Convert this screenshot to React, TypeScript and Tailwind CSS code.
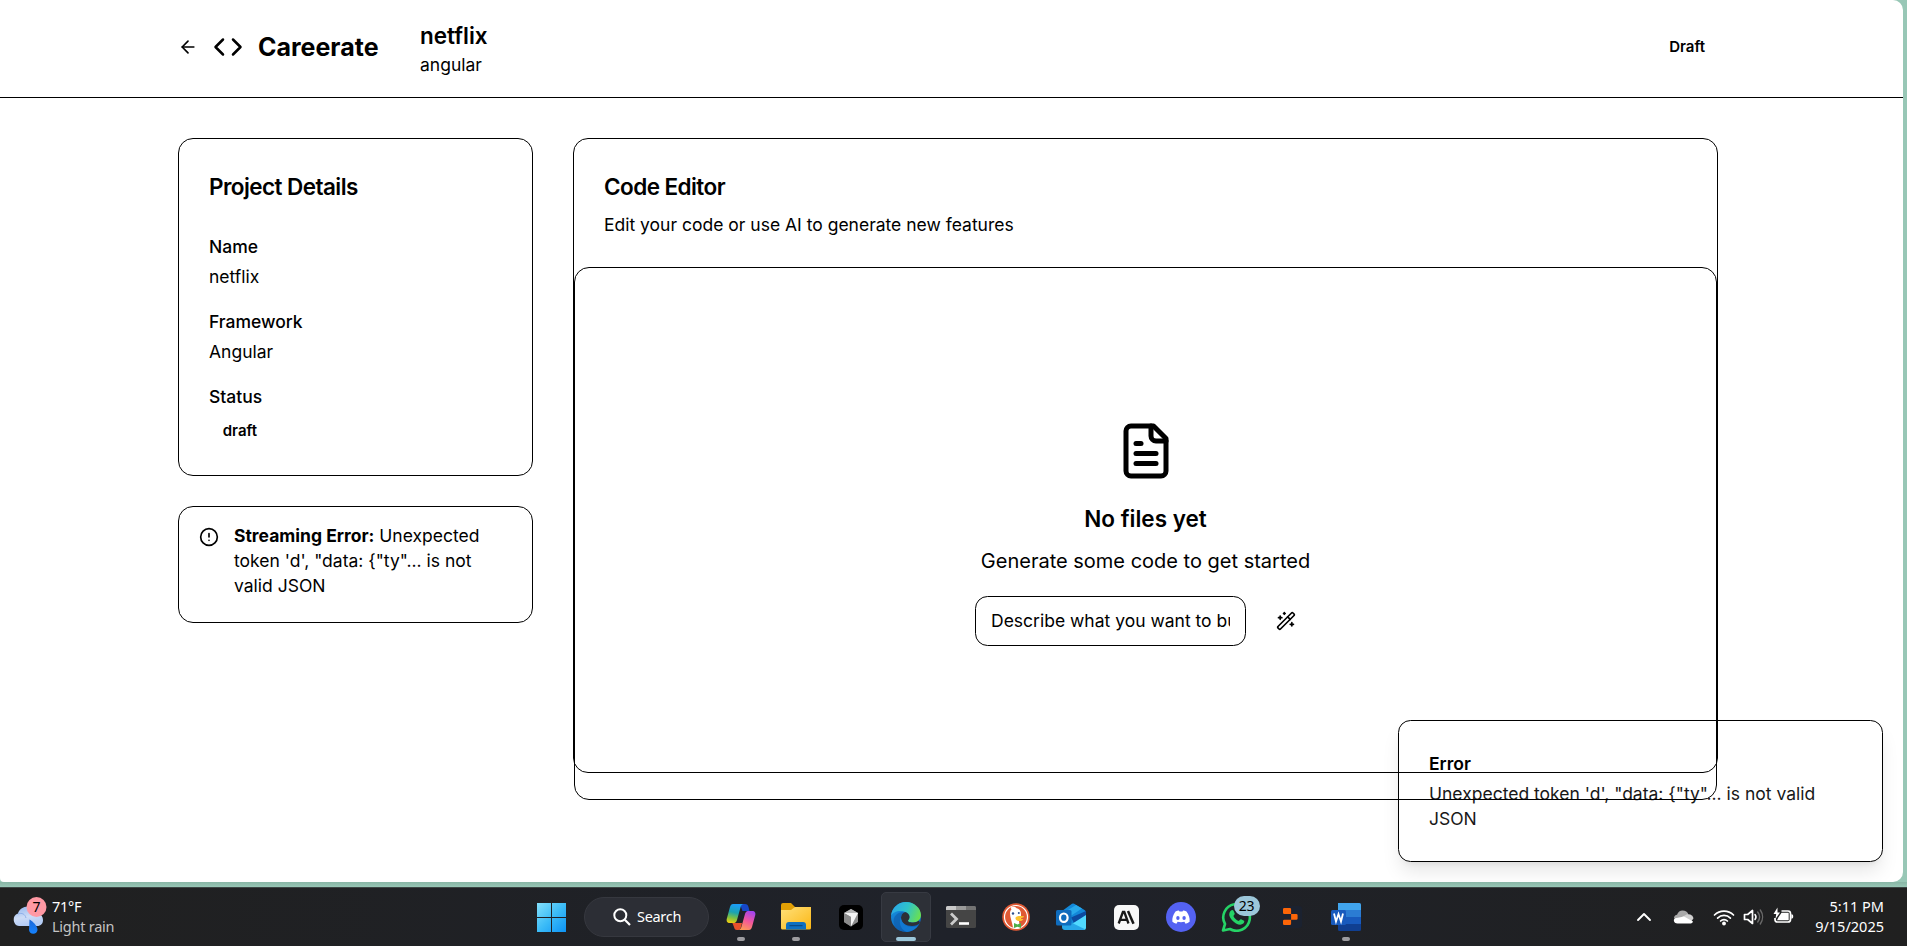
import React from "react";

type IconProps = { size: number; className?: string; children: React.ReactNode };

function LineIcon({ size, className, children }: IconProps) {
  return (
    <svg
      width={size}
      height={size}
      viewBox="0 0 24 24"
      fill="none"
      stroke="currentColor"
      strokeWidth="2"
      strokeLinecap="round"
      strokeLinejoin="round"
      className={"shrink-0 " + (className ?? "")}
    >
      {children}
    </svg>
  );
}

function Header() {
  return (
    <header className="flex h-[98px] shrink-0 items-center border-b border-black pb-[3px] pl-[178px] pr-[198px]">
      <LineIcon size={20}>
        <path d="m12 19-7-7 7-7" />
        <path d="M19 12H5" />
      </LineIcon>
      <LineIcon size={30} className="ml-[15px]">
        <path d="m16 18 6-6-6-6" />
        <path d="m8 6-6 6 6 6" />
      </LineIcon>
      <span className="ml-[15px] w-[162px] text-[25px] leading-[35px] font-bold tracking-normal">Careerate</span>
      <div>
        <h1 className="text-[22.5px] leading-[35px] font-semibold">netflix</h1>
        <p className="-mt-px text-[17.5px] leading-[25px]">angular</p>
      </div>
      <span className="ml-auto text-[15px] leading-5 font-semibold">Draft</span>
    </header>
  );
}

function ProjectDetails() {
  return (
    <section className="flex h-[338px] flex-col rounded-[15px] border border-black px-[30px] pt-[30px]">
      <h2 className="text-[22.5px] leading-[35px] font-semibold tracking-[-0.56px]">Project Details</h2>
      <dl className="mt-[30px] flex flex-col gap-5 text-[17.5px] leading-[25px]">
        <div className="flex flex-col gap-[5px]">
          <dt className="font-medium">Name</dt>
          <dd>netflix</dd>
        </div>
        <div className="flex flex-col gap-[5px]">
          <dt className="font-medium">Framework</dt>
          <dd>Angular</dd>
        </div>
        <div className="flex flex-col gap-[9px]">
          <dt className="font-medium">Status</dt>
          <dd className="pl-[13.75px] text-[15px] font-semibold">draft</dd>
        </div>
      </dl>
    </section>
  );
}

function StreamingAlert() {
  return (
    <section className="mt-[30px] flex h-[117px] gap-[15px] rounded-[15px] border border-black px-5 pt-4">
      <LineIcon size={20} className="mt-[4px]">
        <circle cx="12" cy="12" r="10" />
        <path d="M12 8v4" />
        <path d="M12 16h.01" />
      </LineIcon>
      <p className="w-[260px] text-[17.5px] leading-[25px]">
        <strong className="font-bold">Streaming Error:</strong> Unexpected token 'd', "data: {"{"}"ty"... is not valid JSON
      </p>
    </section>
  );
}

function CodeEditor() {
  return (
    <section className="h-[635px] w-[1145px] rounded-[15px] border border-black">
      <div className="h-[128px] px-[30px] pt-[30px]">
        <h2 className="text-[22.5px] leading-[35px] font-semibold tracking-[-0.56px]">Code Editor</h2>
        <p className="mt-2 text-[17.5px] leading-[25px]">Edit your code or use AI to generate new features</p>
      </div>
      <div className="flex h-[533px] flex-col items-center rounded-[15px] border border-black pt-[153px]">
        <LineIcon size={60}>
          <path d="M15 2H6a2 2 0 0 0-2 2v16a2 2 0 0 0 2 2h12a2 2 0 0 0 2-2V7Z" />
          <path d="M14 2v4a2 2 0 0 0 2 2h4" />
          <path d="M10 9H8" />
          <path d="M16 13H8" />
          <path d="M16 17H8" />
        </LineIcon>
        <h3 className="mt-5 text-[22.5px] leading-[35px] font-semibold">No files yet</h3>
        <p className="mt-[10px] text-[20px] leading-[30px]">Generate some code to get started</p>
        <div className="mt-5 flex gap-[10px]">
          <input
            className="h-[50px] w-[271px] rounded-[12.5px] border border-black px-[15px] pb-[2px] text-[17.5px] leading-[25px] placeholder:text-black placeholder:opacity-100"
            placeholder="Describe what you want to build..."
          />
          <button className="flex h-[50px] items-center px-5" aria-label="Generate">
            <LineIcon size={20}>
              <path d="m21.64 3.64-1.28-1.28a1.21 1.21 0 0 0-1.72 0L2.36 18.64a1.21 1.21 0 0 0 0 1.72l1.28 1.28a1.2 1.2 0 0 0 1.72 0L21.64 5.36a1.2 1.2 0 0 0 0-1.72" />
              <path d="m14 7 3 3" />
              <path d="M5 6v4" />
              <path d="M19 14v4" />
              <path d="M10 2v2" />
              <path d="M7 8H3" />
              <path d="M21 16h-4" />
              <path d="M11 3H9" />
            </LineIcon>
          </button>
        </div>
      </div>
    </section>
  );
}

function Toast() {
  return (
    <div className="absolute right-[20px] bottom-[20px] h-[142px] w-[485px] rounded-[12.5px] border border-black pt-[30px] pl-[30px] text-[17.5px] leading-[25px] shadow-[0_12.5px_18.75px_-3.75px_rgba(0,0,0,0.1),0_5px_7.5px_-5px_rgba(0,0,0,0.1)]">
      <p className="font-semibold">Error</p>
      <p className="mt-[5px] w-[400px] opacity-90">Unexpected token 'd', "data: {"{"}"ty"... is not valid JSON</p>
    </div>
  );
}

function Weather() {
  return (
    <div className="flex w-[537px] shrink-0 items-center pl-[13px]">
      <svg width="34" height="40" viewBox="0 0 34 40" className="-mt-[3px] shrink-0">
        <defs>
          <linearGradient id="cloud" x1="0" y1="0" x2="0.3" y2="1">
            <stop offset="0" stopColor="#8fb4ee" />
            <stop offset="0.6" stopColor="#cddcf6" />
            <stop offset="1" stopColor="#b4ccf5" />
          </linearGradient>
          <linearGradient id="drop" x1="0" y1="0" x2="0" y2="1">
            <stop offset="0" stopColor="#1a66d8" />
            <stop offset="1" stopColor="#1583ff" />
          </linearGradient>
        </defs>
        <path d="M6 30a6.500 6.500 0 0 1-1-12.500c1-4 5-7 10-7 6 0 9 3 10 7 3 1 5 3 5 6.500s-2 6-6 6Z" fill="url(#cloud)" />
        <path d="M5 18c4-1.500 7 0 8 4" stroke="#8fb0ea" strokeWidth="1" fill="none" />
        <path d="M16.500 23.500c3 2 8 6 8 10.500a4.300 4.300 0 0 1-8.500 0Z" fill="url(#drop)" />
        <circle cx="23.500" cy="11" r="10" fill="#ff99a4" />
        <text x="23.500" y="16" textAnchor="middle" fontSize="14" fill="#000" fontFamily="Noto Sans, sans-serif">
          7
        </text>
      </svg>
      <div className="-mt-[2px] ml-[5px] text-[14.5px] leading-[20px] tracking-[-0.25px]">
        <p>71°F</p>
        <p className="text-[#c4c4c4]">Light rain</p>
      </div>
    </div>
  );
}

function Tile({ children, state }: { children: React.ReactNode; state?: "open" | "active" }) {
  return (
    <div
      className={
        state === "active"
          ? "mx-[2.5px] flex h-[50px] w-[50px] flex-col items-center rounded-[5px] border border-[#373a42] bg-[#2d3037] pt-[5px]"
          : "flex h-[50px] w-[55px] flex-col items-center pt-[6px]"
      }
    >
      <div className="flex h-[38px] items-center">{children}</div>
      {state === "open" && <span className="mt-px h-1 w-2 shrink-0 rounded-full bg-[#9d9ca0]" />}
      {state === "active" && <span className="mt-px h-1 w-5 shrink-0 rounded-full bg-[#9cc7da]" />}
    </div>
  );
}

function CopilotLogo() {
  return (
    <svg width="30" height="28" viewBox="0 0 30 28">
      <defs>
        <linearGradient id="cpA" x1="0.3" y1="0" x2="0.1" y2="1">
          <stop offset="0" stopColor="#1b9df5" />
          <stop offset="0.4" stopColor="#1ba3b0" />
          <stop offset="0.7" stopColor="#7fc241" />
          <stop offset="1" stopColor="#fdd10a" />
        </linearGradient>
        <linearGradient id="cpB" x1="0.7" y1="0" x2="0.3" y2="1">
          <stop offset="0" stopColor="#a244ee" />
          <stop offset="0.5" stopColor="#f2569b" />
          <stop offset="1" stopColor="#fd9a56" />
        </linearGradient>
      </defs>
      <path d="M14 1h5c2 0 3 1 3.500 3l1 4h-7Z" fill="#1647c8" />
      <path d="M6 19l3 1h7l-1 4c-.5 2-1 3-3 3h-1c-2 0-2.500-1-3-3Z" fill="#e9512c" />
      <path d="M7 1h11c-2 0-3 1.500-3.500 3.500L11 17c-.7 2.500-2 3-4 3H4c-3 0-4-2-3-5L4 4c.6-2 1.500-3 3-3Z" fill="url(#cpA)" />
      <path d="M23 27H12c2 0 3-1.500 3.500-3.500L19 11c.7-2.500 2-3 4-3h3c3 0 4 2 3 5l-3 11c-.6 2-1.500 3-3 3Z" fill="url(#cpB)" />
    </svg>
  );
}

function FolderLogo() {
  return (
    <svg width="30" height="28" viewBox="0 0 30 28">
      <defs>
        <linearGradient id="folder" x1="0" y1="0" x2="1" y2="1">
          <stop offset="0" stopColor="#ffe07a" />
          <stop offset="1" stopColor="#fcb714" />
        </linearGradient>
      </defs>
      <path d="M0 2a2 2 0 0 1 2-2h8l4 4h14a2 2 0 0 1 2 2v6H0Z" fill="#e2a005" />
      <path d="M0 7h10l4-3h16v21a1.500 1.500 0 0 1-1.500 1.500h-27A1.500 1.500 0 0 1 0 25Z" fill="url(#folder)" />
      <path d="M5 26.500V22a3 3 0 0 1 3-3h14a3 3 0 0 1 3 3v4.500Z" fill="#0f70c0" />
      <path d="M9 22.700h12" stroke="#0a4a86" strokeWidth="1.300" strokeLinecap="round" />
    </svg>
  );
}

function CursorLogo() {
  return (
    <svg width="24" height="25" viewBox="0 0 24 25">
      <rect width="24" height="25" rx="5" fill="#000" />
      <path d="M12 4l7 4v9l-7 4.500L5 17V8Z" fill="#8d8d8d" />
      <path d="M5 8l7-4 7 4-7 2Z" fill="#b9b9b9" />
      <path d="M5 8h14l-7 13.500V12Z" fill="#f4f4f4" />
      <path d="M5 8l7 4v9.500L5 17Z" fill="#8a8a8a" />
    </svg>
  );
}

function EdgeLogo() {
  return (
    <svg width="30" height="30" viewBox="0 0 30 30">
      <defs>
        <linearGradient id="edTop" x1="0" y1="0.3" x2="1" y2="0.6">
          <stop offset="0" stopColor="#2aa7e8" />
          <stop offset="0.5" stopColor="#2fc3c9" />
          <stop offset="1" stopColor="#6be04f" />
        </linearGradient>
        <linearGradient id="edLow" x1="0" y1="0" x2="0.5" y2="1">
          <stop offset="0" stopColor="#1a9be6" />
          <stop offset="1" stopColor="#0b62bd" />
        </linearGradient>
      </defs>
      <circle cx="15" cy="15" r="15" fill="url(#edLow)" />
      <path d="M0 14C1 5 8 0 15 0c8 0 15 6 15 13 0 5-4 7.500-8 7.500-3.500 0-5.500-1-5-2 .4-.8 1.500-1.500 1.500-3.500 0-3.500-4-6-9-6C5 9 1 11 0 14Z" fill="url(#edTop)" />
      <path d="M10 15.500c0-3 2-5 4-5.500 3 .8 4.500 3 4.500 5 0 2-1.100 2.700-1.500 3.500-.5 1 1.500 2 5 2 2.500 0 4.500-.7 6-2L29 21c-2 2-4.500 3-8 3-6 0-11-3.500-11-8.500Z" fill="#2d3037" />
      <path d="M10 15.500C9 21 14 27 21 27.500 17 31 10 30 6 27c-5-5-4-12 0-15 3-2 6-2 8-2-2.500 1-3.500 3-4 5.500Z" fill="#0f5fae" opacity="0.700" />
      <path d="M10 15c-.5 6 5 10 11 10 3 0 5-1 6.500-2C25 27 21 29.500 16 30c-6-2-9-9-6-15Z" fill="#1278d0" />
    </svg>
  );
}

function TerminalLogo() {
  return (
    <svg width="30" height="22" viewBox="0 0 30 22">
      <rect width="30" height="22" rx="1.500" fill="#454545" />
      <path d="M0 4V1.500A1.500 1.500 0 0 1 1.500 0H10v4Z" fill="#c9c9c9" />
      <path d="M10 0h10v4H10Z" fill="#9a9a9a" />
      <path d="M20 0h8.500A1.500 1.500 0 0 1 30 1.500V4H20Z" fill="#737373" />
      <path d="M5 7.500l5.500 5.500L5 18.500" stroke="#ccc" strokeWidth="2.800" fill="none" />
      <path d="M13 17.500h10" stroke="#fff" strokeWidth="2.600" />
    </svg>
  );
}

function DuckLogo() {
  return (
    <svg width="28" height="28" viewBox="0 0 28 28">
      <circle cx="14" cy="14" r="13.800" fill="#e05a35" />
      <circle cx="14" cy="14" r="11.500" fill="none" stroke="#fff" strokeWidth="1.200" />
      <path d="M11 24.500C10 19 8 14 8 10.500 8 7 10 5 13 5c4 0 6 2.500 6 6v4l-2 3 1 7c-2 1-5 .8-7-.5Z" fill="#fff" />
      <path d="M9 5.500c2-1 4-.5 5 .5" stroke="#fff" strokeWidth="2" fill="none" />
      <circle cx="11" cy="10.500" r="1.200" fill="#2d4f8e" />
      <circle cx="16.800" cy="10" r="1" fill="#2d4f8e" />
      <path d="M14 14c2-1.500 5-1 8-.8 0 1.500-3 2-4.500 2.300l4 .7c-1.500 2-4.500 2.300-6.500 1.300-1.500-.8-2-2.500-1-3.500Z" fill="#fcc32e" />
      <path d="M12 20l3.500 1.500L19 20v5l-3.500-1.300L12 25Z" fill="#4fae48" />
    </svg>
  );
}

function OutlookLogo() {
  return (
    <svg width="30" height="28" viewBox="0 0 30 28">
      <path d="M6 8L16 .8a2 2 0 0 1 2.200 0L28.500 7A3 3 0 0 1 30 9.500V20H6Z" fill="#1388d9" />
      <path d="M8 9.500L20 2l6 3.600L13 14Z" fill="#28a8ea" />
      <path d="M15 14.500L30 8v5.500L18 20Z" fill="#0c4aa0" />
      <path d="M8 26L30 12v12.500a2.500 2.500 0 0 1-2.500 2.500H10Z" fill="#50d9ff" />
      <path d="M6 15l23 11.300a2.500 2.500 0 0 1-1.500.7H9a3 3 0 0 1-3-3Z" fill="#27a7e8" />
      <rect y="7" width="15.500" height="15.500" rx="1.500" fill="#0f6cbd" />
      <ellipse cx="7.800" cy="14.700" rx="3.800" ry="4.200" fill="none" stroke="#fff" strokeWidth="2.200" />
    </svg>
  );
}

function AnthropicLogo() {
  return (
    <svg width="25" height="25" viewBox="0 0 25 25">
      <rect width="25" height="25" rx="5" fill="#f8f8f8" />
      <path d="M4.700 18.500L8.900 7h1.400l4.200 11.500M6.500 14.800h6.200" stroke="#171717" strokeWidth="2.300" fill="none" />
      <path d="M14 6l5.500 12.700" stroke="#171717" strokeWidth="2.500" />
    </svg>
  );
}

function DiscordLogo() {
  return (
    <svg width="30" height="30" viewBox="0 0 30 30">
      <circle cx="15" cy="15" r="15" fill="#5462f2" />
      <path d="M9.500 9.500c1.200-.6 2.200-.9 3.400-1l.6 1.100h3l.6-1.100c1.200.1 2.200.4 3.400 1 2.400 3.300 3.500 6.500 3.100 10.300-1.200.9-2.600 1.500-4 1.900l-1.200-2c-2.200.6-4.600.6-6.800 0l-1.200 2c-1.400-.4-2.800-1-4-1.900-.4-3.800.7-7 3.100-10.300Z" fill="#fff" />
      <ellipse cx="11.900" cy="16" rx="1.700" ry="1.900" fill="#5462f2" />
      <ellipse cx="18.100" cy="16" rx="1.700" ry="1.900" fill="#5462f2" />
    </svg>
  );
}

function WhatsAppLogo() {
  return (
    <div className="relative">
      <svg width="31" height="30" viewBox="0 0 31 30">
        <path d="M2 28.500l2-6.500A13.300 13.300 0 1 1 9 27Z" fill="none" stroke="#25d366" strokeWidth="2.600" strokeLinejoin="round" />
        <path d="M10 8.500c1-.8 2-.7 2.500.3l1.200 2.700c.3.900-1 1.800-1.300 2.500 1 2.500 3 4 5.300 5 .8-.5 1.500-2 2.400-1.700l2.900 1.500c.6.400.2 2-.7 2.800-2 1.600-4.500 1.200-7.300-.2-3.300-1.800-5.600-4.400-6.600-7.600-.5-2 .3-4.200 1.600-5.300Z" fill="#25d366" />
      </svg>
      <span className="absolute -top-[6px] left-[13px] flex h-5 w-[26px] items-center justify-center rounded-full bg-[#9cc7da] text-[14px] leading-5 tracking-[-0.3px] text-black">
        23
      </span>
    </div>
  );
}

function ReplitLogo() {
  return (
    <svg width="22" height="22" viewBox="0 0 22 22">
      <rect width="22" height="22" rx="3" fill="#1b2230" />
      <path d="M4.300 2h5.500a1.300 1.300 0 0 1 1.300 1.300V8H4.300A1.300 1.300 0 0 1 3 6.700V3.300A1.300 1.300 0 0 1 4.300 2ZM11.100 8h5.200a1.300 1.300 0 0 1 1.300 1.300v3.200a1.300 1.300 0 0 1-1.300 1.300h-5.200ZM4.300 13.800h6.800v4a1.300 1.300 0 0 1-1.300 1.300H4.300A1.300 1.300 0 0 1 3 17.800v-2.700a1.300 1.300 0 0 1 1.300-1.300Z" fill="#fb6508" />
    </svg>
  );
}

function WordLogo() {
  return (
    <svg width="30" height="28" viewBox="0 0 30 28">
      <path d="M7 0h21.500A1.500 1.500 0 0 1 30 1.500V7H7Z" fill="#41a5ee" />
      <path d="M7 7h23v7H7Z" fill="#2b7cd3" />
      <path d="M7 14h23v7H7Z" fill="#185abd" />
      <path d="M7 21h23v5.500a1.500 1.500 0 0 1-1.500 1.500h-20A1.500 1.500 0 0 1 7 26.500Z" fill="#103f91" />
      <rect y="7" width="15" height="15" rx="1.500" fill="#185abd" />
      <path d="M3 10.500l2 8 2.500-7.500 2.500 7.500 2-8" stroke="#fff" strokeWidth="1.800" fill="none" />
    </svg>
  );
}

function Tray() {
  return (
    <div className="ml-auto flex items-center pr-[23px]">
      <svg width="16" height="10" viewBox="0 0 16 10">
        <path d="M2 8l6-6 6 6" stroke="#fff" strokeWidth="1.900" fill="none" strokeLinecap="round" strokeLinejoin="round" />
      </svg>
      <svg width="21" height="14" viewBox="0 0 21 14" className="ml-[21px]">
        <path d="M1 8c0-2 1.500-3 3-3.300C5 2 7 .5 9.500.5c3 0 5 1.500 6 4L4 11Z" fill="#a9a9a9" />
        <path d="M9 7l5-2.700c4-.5 6 1.500 6.500 4L18 12Z" fill="#d0d0d0" />
        <path d="M.8 10c.5-1.500 2-2.300 4-2.300L11 6.500l9 5C19.500 13 18.500 13.500 17 13.500H4.500C2.500 13.500.8 12.500.8 10Z" fill="#fff" />
      </svg>
      <svg width="22" height="18" viewBox="0 0 22 18" className="ml-[19px]">
        <g fill="none" stroke="#fff" strokeWidth="1.700" strokeLinecap="round">
          <path d="M1.500 7a13.500 13.500 0 0 1 19 0" />
          <path d="M4.600 10.100a9 9 0 0 1 12.800 0" />
          <path d="M7.600 13a4.800 4.800 0 0 1 6.800 0" />
        </g>
        <circle cx="11" cy="15.500" r="1.900" fill="#fff" />
      </svg>
      <svg width="21" height="20" viewBox="0 0 21 20" className="ml-[8px]">
        <path d="M1.500 7.500h3.200L9.500 3.500v13l-4.800-4H1.500Z" fill="none" stroke="#fff" strokeWidth="1.700" strokeLinejoin="round" />
        <path d="M12 7.500c1.200 1.500 1.200 3.500 0 5" fill="none" stroke="#fff" strokeWidth="1.500" strokeLinecap="round" />
        <path d="M14.700 5c2.300 3 2.300 7 0 10M17.300 3c3 4.200 3 9.800 0 14" fill="none" stroke="#6a6a6a" strokeWidth="1.400" strokeLinecap="round" />
      </svg>
      <svg width="21" height="18" viewBox="0 0 21 18" className="-mt-[2px] ml-[9px]">
        <path d="M8.500 4H15a2.500 2.500 0 0 1 2.500 2.500v6A2.500 2.500 0 0 1 15 15H4.500A2.500 2.500 0 0 1 2 12.500V11" fill="none" stroke="#fff" strokeWidth="1.700" />
        <path d="M8.500 5.800h7.200v7.400H4l1.500-3Z" fill="#fff" />
        <path d="M18.300 7.300c1.500 0 1.900.8 1.900 2.200s-.4 2.200-1.900 2.200Z" fill="#fff" />
        <path d="M4.500.5L.5 7h2.700L2.500 12 7 5.500H4.500Z" fill="#fff" />
      </svg>
      <div className="-mt-[2px] ml-[17px] w-[73px] text-right text-[14.5px] leading-5 whitespace-nowrap">
        <p>5:11 PM</p>
        <p>9/15/2025</p>
      </div>
    </div>
  );
}

function Taskbar() {
  return (
    <footer className="flex h-[59px] items-center border-t border-[#3c4644] bg-linear-to-r from-[#202020] via-[#1f222a] to-[#202020] font-['Noto_Sans',sans-serif] text-white">
      <Weather />
      <svg width="29" height="29" viewBox="0 0 29 29" className="shrink-0">
        <defs>
          <linearGradient id="win" x1="0" y1="0" x2="29" y2="29" gradientUnits="userSpaceOnUse">
            <stop offset="0" stopColor="#84e0fb" />
            <stop offset="0.5" stopColor="#3cbcf7" />
            <stop offset="1" stopColor="#0c93f5" />
          </linearGradient>
        </defs>
        <path d="M0 0h14v14H0ZM15 0h14v14H15ZM0 15h14v14H0ZM15 15h14v14H15Z" fill="url(#win)" />
      </svg>
      <div className="ml-[18px] flex h-[40px] w-[125px] shrink-0 items-center rounded-full border border-[#36383f] bg-[#2c2e35] pl-[28px] text-[14.5px]">
        <svg width="18" height="18" viewBox="0 0 18 18">
          <circle cx="7.300" cy="7.300" r="6" stroke="#fff" strokeWidth="2" fill="none" />
          <path d="M11.800 11.800L17 17" stroke="#fff" strokeWidth="2.200" />
        </svg>
        <span className="ml-[6px] tracking-[-0.3px]">Search</span>
      </div>
      <div className="ml-[4.5px] flex shrink-0 items-center">
        <Tile state="open"><CopilotLogo /></Tile>
        <Tile state="open"><FolderLogo /></Tile>
        <Tile><CursorLogo /></Tile>
        <Tile state="active"><EdgeLogo /></Tile>
        <Tile><TerminalLogo /></Tile>
        <Tile><DuckLogo /></Tile>
        <Tile><OutlookLogo /></Tile>
        <Tile><AnthropicLogo /></Tile>
        <Tile><DiscordLogo /></Tile>
        <Tile><WhatsAppLogo /></Tile>
        <Tile><ReplitLogo /></Tile>
        <Tile state="open"><WordLogo /></Tile>
      </div>
      <Tray />
    </footer>
  );
}

export default function App() {
  return (
    <div className="flex h-[946px] w-full flex-col overflow-hidden bg-[#98c7b6] font-['Inter',sans-serif] text-black">
      <div className="relative mr-1 flex h-[882px] shrink-0 flex-col overflow-hidden rounded-[10px] rounded-tl-none rounded-bl-[4px] bg-white">
        <Header />
        <main className="flex items-start gap-[40px] pt-[40px] pl-[178px]">
          <aside className="w-[355px] shrink-0">
            <ProjectDetails />
            <StreamingAlert />
          </aside>
          <CodeEditor />
        </main>
        <Toast />
      </div>
      <div className="h-[5px] shrink-0 bg-linear-to-b from-[#88b5a5] to-[#98c7b6]" />
      <Taskbar />
    </div>
  );
}
